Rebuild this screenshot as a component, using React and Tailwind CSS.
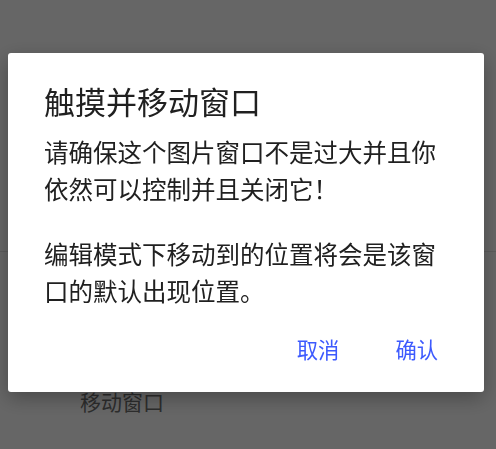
import React from "react";

export default function App() {
  return (
    <div className="relative h-[449px] w-[496px] overflow-hidden bg-white font-['Noto_Sans_CJK_SC','Noto_Sans',sans-serif]">
      {/* underlying page */}
      <div className="h-[252px] border-b border-[#e4e4e4]" />
      <div className="mt-[131px] pl-[80px] text-[21px] leading-[36px] text-[#707070]">移动窗口</div>

      {/* modal overlay */}
      <div className="fixed inset-0 bg-black/60">
        <div className="ml-[8px] mt-[53px] flex h-[339px] w-[476px] flex-col rounded-[3px] bg-white shadow-[0_6px_20px_rgba(0,0,0,0.3)]">
          <div className="px-[36px] pt-[30px]">
            <h2 className="text-[31px] leading-[36px] text-[#202020]">触摸并移动窗口</h2>
            <p className="mt-[15px] text-[24.5px] leading-[36.7px] text-[#202020]">
              请确保这个图片窗口不是过大并且你
              <br />
              依然可以控制并且关闭它！
            </p>
            <p className="mt-[29px] text-[24.5px] leading-[36.7px] text-[#202020]">
              编辑模式下移动到的位置将会是该窗
              <br />
              口的默认出现位置。
            </p>
          </div>
          <div className="mt-auto flex justify-end gap-[32px] pb-[25px] pr-[34px]">
            <button className="px-[12px] text-[21.3px] leading-[36px] text-[#3d5afe]">取消</button>
            <button className="px-[12px] text-[21.3px] leading-[36px] text-[#3d5afe]">确认</button>
          </div>
        </div>
      </div>
    </div>
  );
}
